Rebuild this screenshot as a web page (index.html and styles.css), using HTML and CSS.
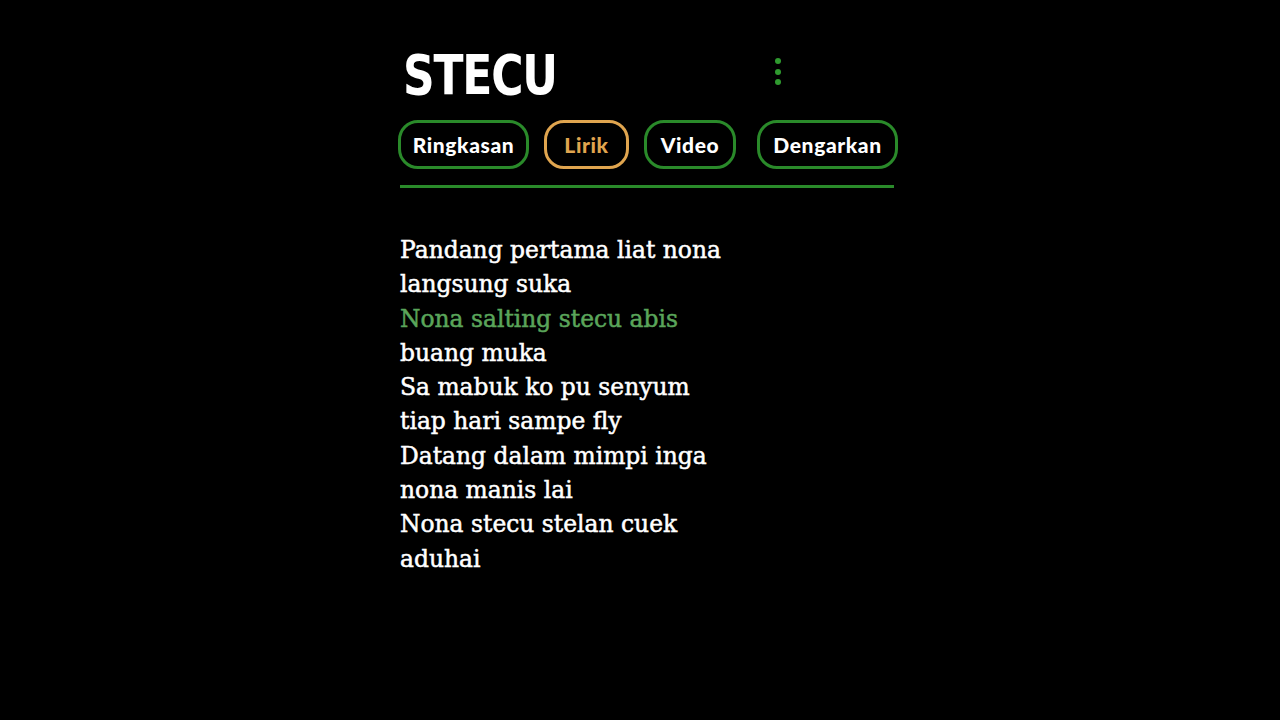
FILE: index.html
```html
<!DOCTYPE html>
<html lang="id">
<head>
<meta charset="utf-8">
<title>STECU</title>
<link rel="stylesheet" href="styles.css">
</head>
<body>
<main class="page">
  <header class="head">
    <h1 class="title">STECU</h1>
    <button class="kebab" aria-label="Menu">
      <span class="dot"></span><span class="dot"></span><span class="dot"></span>
    </button>
  </header>
  <nav class="tabs">
    <span class="tab tab-a">Ringkasan</span>
    <span class="tab tab-b tab-active">Lirik</span>
    <span class="tab tab-c">Video</span>
    <span class="tab tab-d">Dengarkan</span>
  </nav>
  <hr class="divider">
  <section class="lyrics">
    <p class="line">Pandang pertama liat nona</p>
    <p class="line">langsung suka</p>
    <p class="line line-hl">Nona salting stecu abis</p>
    <p class="line">buang muka</p>
    <p class="line">Sa mabuk ko pu senyum</p>
    <p class="line">tiap hari sampe fly</p>
    <p class="line">Datang dalam mimpi inga</p>
    <p class="line">nona manis lai</p>
    <p class="line">Nona stecu stelan cuek</p>
    <p class="line">aduhai</p>
  </section>
</main>
</body>
</html>
```

FILE: styles.css
```css
html, body {
  margin: 0;
  padding: 0;
  background: #000;
  height: 100%;
}
.page {
  width: 500px;
  margin-left: 398px;
  padding-top: 44px;
  font-family: "DejaVu Sans", sans-serif;
}
.head {
  display: flex;
  align-items: flex-start;
  height: 64px;
}
.title {
  margin: 0 0 0 5px;
  font-family: "DejaVu Sans", sans-serif;
  font-weight: 700;
  font-size: 55px;
  line-height: 62px;
  letter-spacing: -1.5px;
  color: #fff;
  width: 372px;
  transform: scaleX(0.8);
  transform-origin: left center;
}
.kebab {
  margin-top: 14px;
  background: none;
  border: 0;
  padding: 0;
  display: flex;
  flex-direction: column;
  gap: 4.5px;
}
.dot {
  width: 6px;
  height: 6px;
  border-radius: 50%;
  background: #2f9a2f;
}
.tabs {
  display: flex;
  margin-top: 12px;
}
.tab {
  box-sizing: border-box;
  height: 49px;
  display: flex;
  align-items: center;
  justify-content: center;
  border: 3px solid #2a8a2a;
  border-radius: 20px;
  color: #fff;
  font-family: "Lato", sans-serif;
  font-weight: 900;
  font-size: 21px;
  letter-spacing: 0.6px;
}
.tab-a { width: 131px; }
.tab-b { width: 85px; margin-left: 15px; }
.tab-c { width: 92px; margin-left: 15px; }
.tab-d { width: 141px; margin-left: 21px; }
.tab-active {
  border-color: #e0a54f;
  color: #e0a54f;
}
.divider {
  margin: 16px 0 0 2px;
  width: 494px;
  height: 3px;
  border: 0;
  background: #2a8a2a;
}
.lyrics {
  margin-top: 45px;
  padding-left: 2px;
}
.line {
  margin: 0;
  font-family: "DejaVu Serif", serif;
  font-size: 23.4px;
  line-height: 34.3px;
  color: #fff;
  -webkit-text-stroke: 0.5px currentColor;
}
.line-hl { color: #5aa55a; }
```
